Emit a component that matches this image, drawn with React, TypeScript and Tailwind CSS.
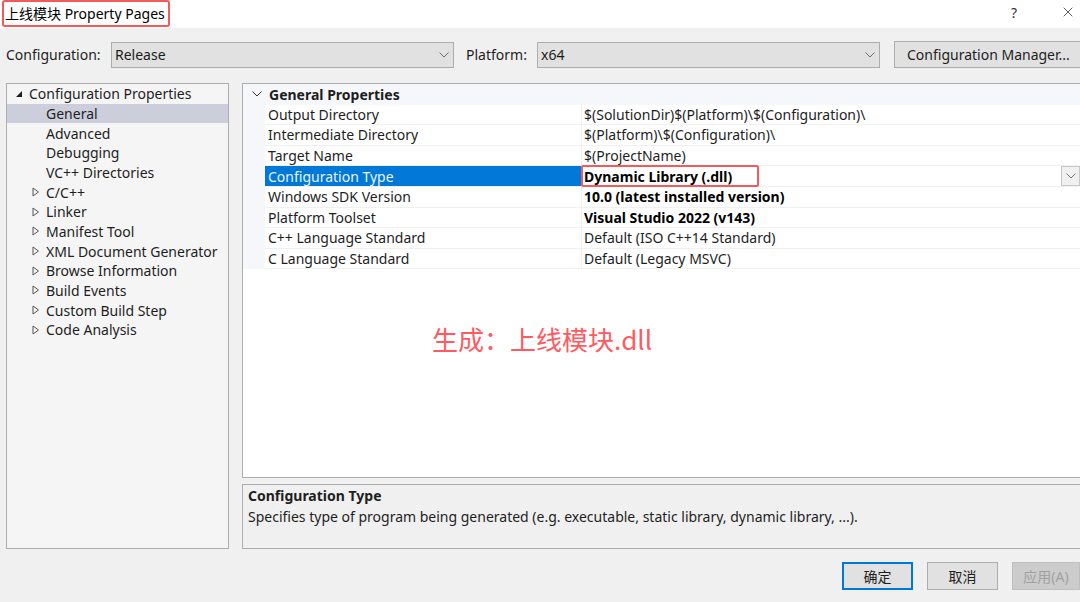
import { X } from 'lucide-react';

const font = { fontFamily: '"Noto Sans", "Noto Sans CJK SC", sans-serif' };

const tree: { label: string; level: 0 | 1 | 2; kind: 'open' | 'closed' | 'leaf'; selected?: boolean }[] = [
  { label: 'Configuration Properties', level: 0, kind: 'open' },
  { label: 'General', level: 1, kind: 'leaf', selected: true },
  { label: 'Advanced', level: 1, kind: 'leaf' },
  { label: 'Debugging', level: 1, kind: 'leaf' },
  { label: 'VC++ Directories', level: 1, kind: 'leaf' },
  { label: 'C/C++', level: 1, kind: 'closed' },
  { label: 'Linker', level: 1, kind: 'closed' },
  { label: 'Manifest Tool', level: 1, kind: 'closed' },
  { label: 'XML Document Generator', level: 1, kind: 'closed' },
  { label: 'Browse Information', level: 1, kind: 'closed' },
  { label: 'Build Events', level: 1, kind: 'closed' },
  { label: 'Custom Build Step', level: 1, kind: 'closed' },
  { label: 'Code Analysis', level: 1, kind: 'closed' },
];

const props: { name: string; value: string; bold?: boolean; selected?: boolean }[] = [
  { name: 'Output Directory', value: '$(SolutionDir)$(Platform)\\$(Configuration)\\' },
  { name: 'Intermediate Directory', value: '$(Platform)\\$(Configuration)\\' },
  { name: 'Target Name', value: '$(ProjectName)' },
  { name: 'Configuration Type', value: 'Dynamic Library (.dll)', bold: true, selected: true },
  { name: 'Windows SDK Version', value: '10.0 (latest installed version)', bold: true },
  { name: 'Platform Toolset', value: 'Visual Studio 2022 (v143)', bold: true },
  { name: 'C++ Language Standard', value: 'Default (ISO C++14 Standard)' },
  { name: 'C Language Standard', value: 'Default (Legacy MSVC)' },
];

function Chevron({ className = '' }: { className?: string }) {
  return (
    <svg className={className} width="10" height="6" viewBox="0 0 10 6" fill="none" stroke="currentColor" strokeWidth="1">
      <path d="M0.5 0.5 L5 5 L9.5 0.5" />
    </svg>
  );
}

function Combo({ value, width }: { value: string; width: string }) {
  return (
    <div className={`${width} shrink-0 h-[26px] flex items-center justify-between bg-[#e1e1e1] border border-[#adadad] pl-[3px] pr-[4px] text-[14px] text-[#1a1a1a]`}>
      <span>{value}</span>
      <Chevron className="text-[#6d6d6d]" />
    </div>
  );
}

function TreeArrow({ kind }: { kind: 'open' | 'closed' | 'leaf' }) {
  if (kind === 'open') {
    return (
      <svg width="8" height="8" viewBox="0 0 8 8" className="text-[#1e1e1e]">
        <path d="M7 1 L7 7 L1 7 Z" fill="currentColor" />
      </svg>
    );
  }
  if (kind === 'closed') {
    return (
      <svg width="8" height="10" viewBox="0 0 8 10" className="text-[#555]">
        <path d="M1 1 L6.5 5 L1 9 Z" fill="none" stroke="currentColor" strokeWidth="1" />
      </svg>
    );
  }
  return <span className="w-[8px]" />;
}

export default function App() {
  return (
    <div style={font} className="w-[1080px] h-[602px] bg-[#f0f0f0] flex flex-col overflow-hidden text-[#1e1e1e] relative">
      {/* title bar */}
      <div className="h-[28px] bg-white flex items-start justify-between shrink-0">
        <div className="ml-[2px] h-[27px] border-2 border-[#f25a5c] rounded-[3px] pl-[1px] pr-[3px] flex items-center text-[14px] text-black">
          上线模块 Property Pages
        </div>
        <div className="flex items-center h-[24px] text-[#333]">
          <span className="text-[14px] mr-[43px]">?</span>
          <X size={16} strokeWidth={1.2} className="mr-[4px]" />
        </div>
      </div>

      {/* config row */}
      <div className="h-[55px] flex items-center text-[14px] pl-[6px] shrink-0 pb-[2px]">
        <span className="w-[105px] shrink-0">Configuration:</span>
        <Combo value="Release" width="w-[343px]" />
        <span className="ml-[12px] w-[71px] shrink-0">Platform:</span>
        <Combo value="x64" width="w-[343px]" />
        <div className="ml-[14px] h-[27px] w-[200px] shrink-0 flex items-center pl-[12px] bg-[#e1e1e1] border border-[#adadad] text-[14px]">
          Configuration Manager...
        </div>
      </div>

      {/* main */}
      <div className="flex gap-[13px] pl-[6px] h-[466px] shrink-0">
        {/* tree */}
        <div className="w-[223px] shrink-0 bg-[#f5f5f5] border border-[#adadad] text-[14px]">
          {tree.map((t) => (
            <div
              key={t.label}
              className={`h-[19.67px] flex items-center ${t.selected ? 'bg-[#cccedb]' : ''}`}
            >
              <span className={`flex items-center ${t.level === 0 ? 'ml-[8px] w-[14px]' : 'ml-[25px] w-[14px]'}`}>
                <TreeArrow kind={t.kind} />
              </span>
              <span className="whitespace-nowrap">{t.label}</span>
            </div>
          ))}
        </div>

        {/* right column */}
        <div className="flex-1 flex flex-col gap-[6px] min-w-0">
          <div className="h-[395px] bg-white border border-[#adadad] border-r-0 flex flex-col">
            <div className="h-[20.6px] bg-[#f5f7fa] flex items-center text-[14px] font-bold shrink-0">
              <span className="w-[26px] flex justify-center pl-[2px]">
                <Chevron className="text-[#333]" />
              </span>
              <span>General Properties</span>
            </div>
            {props.map((p) => (
              <div key={p.name} className="h-[20.6px] flex text-[14px]">
                <div className="w-[22px] bg-[#f5f7fa] shrink-0" />
                <div className="flex-1 flex border-b border-[#f0f0f0]">
                  <div
                    className={`w-[317px] shrink-0 flex items-center pl-[3px] border-r border-[#f0f0f0] ${
                      p.selected ? 'bg-[#0078d7] text-[#eaf4ff]' : ''
                    }`}
                  >
                    {p.name}
                  </div>
                  <div className="flex-1 flex items-center justify-between">
                    {p.selected ? (
                      <span className="h-[22px] w-[178px] -ml-[1px] border-2 border-[#f25a5c] rounded-[2px] flex items-center pl-[1px] font-bold text-black">
                        {p.value}
                      </span>
                    ) : (
                      <span className={`pl-[2px] ${p.bold ? 'font-bold text-black' : ''}`}>{p.value}</span>
                    )}
                    {p.selected && (
                      <span className="w-[19px] h-[20px] bg-[#f0f0f0] border border-[#c8c8c8] flex items-center justify-center">
                        <Chevron className="text-[#777]" />
                      </span>
                    )}
                  </div>
                </div>
              </div>
            ))}
          </div>
          <div className="flex-1 border border-[#adadad] border-r-0 bg-[#f0f0f0] px-[5px] pt-[1px] text-[14px]">
            <div className="font-bold leading-[20px]">Configuration Type</div>
            <div className="leading-[21px]">
              Specifies type of program being generated (e.g. executable, static library, dynamic library, ...).
            </div>
          </div>
        </div>
      </div>

      {/* buttons */}
      <div className="flex justify-end gap-[14px] mt-[13px] text-[14px]">
        <div className="w-[71px] h-[28px] flex items-center justify-center bg-[#e1e1e1] border-2 border-[#0078d7]">确定</div>
        <div className="w-[71px] h-[28px] flex items-center justify-center bg-[#e1e1e1] border border-[#adadad]">取消</div>
        <div className="w-[68px] h-[28px] flex items-center justify-center bg-[#cccccc] border border-[#bfbfbf] text-[#a0a0a0]">应用(A)</div>
      </div>

      {/* annotation */}
      <div className="absolute left-[432px] top-[319px] text-[26px] text-[#ff5a5f]" style={{ fontFamily: '"Noto Sans CJK SC", sans-serif' }}>
        生成：上线模块.dll
      </div>
    </div>
  );
}
